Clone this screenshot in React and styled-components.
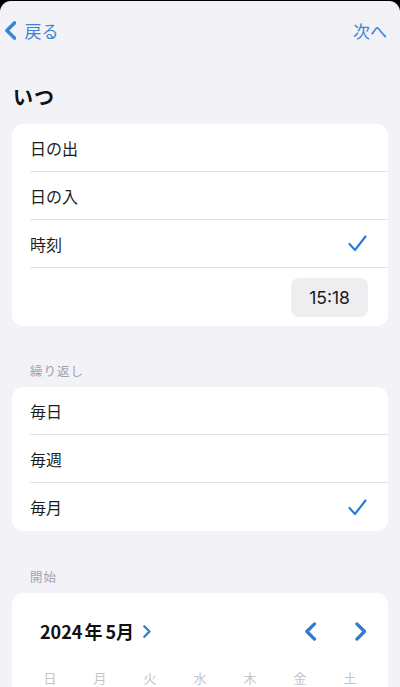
import React from "react";
import styled, { createGlobalStyle } from "styled-components";

const blue = "#2d7cd4";

const GlobalStyle = createGlobalStyle`
  html, body {
    margin: 0;
    padding: 0;
    background: #000;
  }
  body {
    font-family: "Noto Sans CJK JP", "Noto Sans", "Liberation Sans", sans-serif;
    -webkit-font-smoothing: antialiased;
  }
`;

const Chevron = ({ dir = "right", size = 14, weight = 2.6 }) => (
  <svg width={size * 0.6} height={size} viewBox="0 0 9 15" fill="none">
    <path
      d={dir === "right" ? "M1.5 1.5 L7.5 7.5 L1.5 13.5" : "M7.5 1.5 L1.5 7.5 L7.5 13.5"}
      stroke={blue}
      strokeWidth={weight}
      strokeLinecap="round"
      strokeLinejoin="round"
    />
  </svg>
);

const Check = () => (
  <svg width="19" height="17" viewBox="0 0 19 17" fill="none">
    <path d="M1.5 9 L7 15 L17.5 1.5" stroke={blue} strokeWidth="2.2" strokeLinecap="round" strokeLinejoin="round" />
  </svg>
);

export default function App() {
  const weekdays = ["日", "月", "火", "水", "木", "金", "土"];
  return (
    <>
      <GlobalStyle />
      <Sheet>
        <NavBar>
          <NavButton>
            <Chevron dir="left" size={19} weight={2.8} />
            <span>戻る</span>
          </NavButton>
          <NavButton>次へ</NavButton>
        </NavBar>

        <Title>いつ</Title>

        <Card>
          <Row>日の出</Row>
          <Row>日の入</Row>
          <Row>
            時刻
            <Check />
          </Row>
          <TimeRow>
            <TimePill>15:18</TimePill>
          </TimeRow>
        </Card>

        <SectionLabel>繰り返し</SectionLabel>
        <Card $tight>
          <Row>毎日</Row>
          <Row>毎週</Row>
          <Row>
            毎月
            <Check />
          </Row>
        </Card>

        <SectionLabel $below>開始</SectionLabel>
        <Card $tight>
          <CalendarHead>
            <MonthTitle>
              <span>2024<Gap>年</Gap>5月</span>
              <Chevron dir="right" size={13} weight={2.6} />
            </MonthTitle>
            <MonthNav>
              <Chevron dir="left" size={19} weight={2.6} />
              <Chevron dir="right" size={19} weight={2.6} />
            </MonthNav>
          </CalendarHead>
          <WeekRow>
            {weekdays.map((d) => (
              <WeekDay key={d}>{d}</WeekDay>
            ))}
          </WeekRow>
        </Card>
      </Sheet>
    </>
  );
}

const Sheet = styled.div`
  margin-top: 1px;
  min-height: 686px;
  background: #f2f2f7;
  border-radius: 11px 11px 0 0;
  padding: 0 12px;
  overflow: hidden;
  box-sizing: border-box;
`;

const NavBar = styled.div`
  display: flex;
  justify-content: space-between;
  align-items: center;
  height: 30px;
  margin: 14px 1px 0 -7px;
`;

const NavButton = styled.div`
  display: flex;
  align-items: center;
  gap: 8px;
  color: ${blue};
  font-size: 17px;
  opacity: 0.92;
`;

const Title = styled.h1`
  margin: 38px 0 0 1px;
  font-size: 20px;
  font-weight: 700;
  color: #111;
  line-height: 28px;
  letter-spacing: 1px;
`;

const Card = styled.div`
  background: #fff;
  border-radius: 11px;
  margin-top: ${(p) => (p.$tight ? "7px" : "13px")};
  overflow: hidden;
`;

const Row = styled.div`
  display: flex;
  justify-content: space-between;
  align-items: center;
  height: 47px;
  margin-left: 18px;
  padding-right: 21px;
  border-bottom: 1px solid #e2e2e6;
  font-size: 16px;
  color: #1c1c1e;
  &:last-child {
    height: 48px;
    border-bottom: none;
  }
`;

const TimeRow = styled.div`
  display: flex;
  justify-content: flex-end;
  padding: 10px 20px 9px 0;
`;

const TimePill = styled.div`
  background: #eeeef0;
  border-radius: 8px;
  width: 77px;
  height: 39px;
  display: flex;
  align-items: center;
  justify-content: center;
  font-family: "Inter", "Liberation Sans", sans-serif;
  font-size: 17.5px;
  color: #1c1c1e;
`;

const SectionLabel = styled.div`
  margin: ${(p) => (p.$below ? "37px" : "36px")} 0 0 18px;
  font-size: 12.5px;
  color: #a2a2a8;
  line-height: 18px;
  letter-spacing: 1px;
`;

const CalendarHead = styled.div`
  display: flex;
  justify-content: space-between;
  align-items: center;
  padding: 26px 22px 0 28px;
  height: 24px;
`;

const MonthTitle = styled.div`
  display: flex;
  align-items: center;
  gap: 9px;
  font-size: 18px;
  font-weight: 700;
  color: #111;
`;

const Gap = styled.span`
  margin: 0 3px 0 2px;
`;

const MonthNav = styled.div`
  display: flex;
  align-items: center;
  gap: 38px;
`;

const WeekRow = styled.div`
  display: grid;
  grid-template-columns: repeat(7, 50px);
  padding: 25px 13px 10px 13px;
`;

const WeekDay = styled.div`
  text-align: center;
  font-size: 13px;
  color: #c4c4c8;
`;
